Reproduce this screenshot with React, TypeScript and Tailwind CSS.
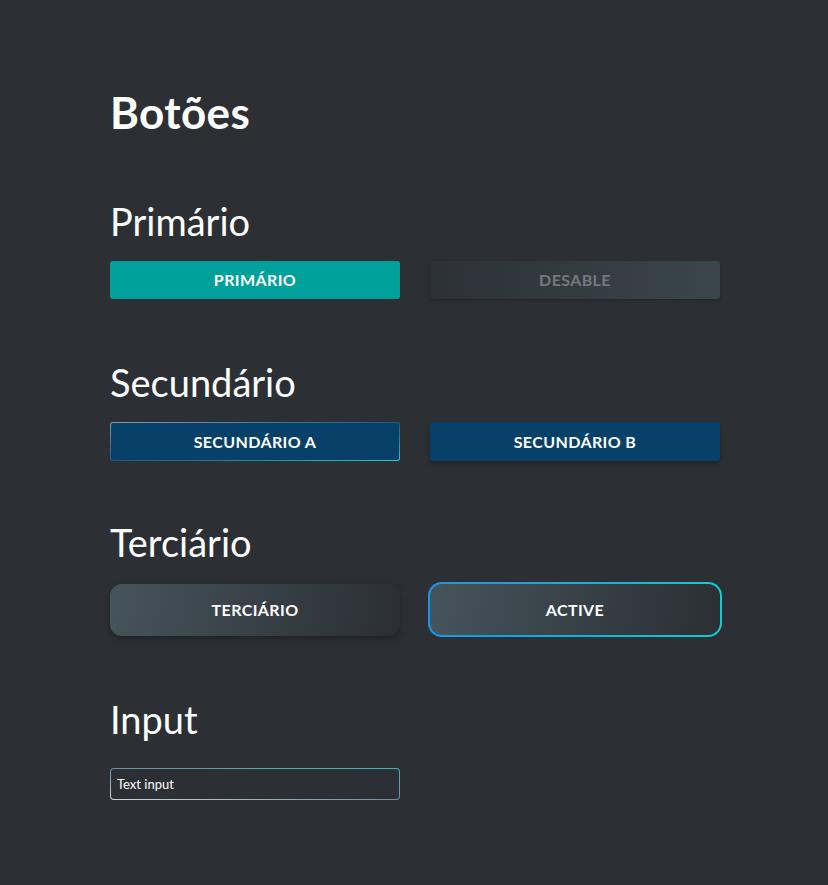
import React from 'react';

const font = { fontFamily: 'Lato, "Open Sans", sans-serif' };

const Heading: React.FC<{ children: React.ReactNode }> = ({ children }) => (
  <h2 className="text-[38px] leading-[40px] text-white font-normal">{children}</h2>
);

const btnText = 'text-[16px] font-bold uppercase tracking-[0.4px]';

const tertiaryBg = 'bg-[linear-gradient(100deg,#46545c_0%,#363f45_55%,#2b2f33_100%)]';

export default function App() {
  return (
    <div style={font} className="min-h-[885px] w-full bg-[#2c3035] pl-[110px] pt-[88px] pb-[80px]">
      <h1 className="text-[44px] leading-[48px] font-bold text-white tracking-[0.4px]">Botões</h1>

      <section className="mt-[65px]">
        <Heading>Primário</Heading>
        <div className="mt-[20px] grid grid-cols-[290px_290px] gap-x-[30px]">
          <button className={`h-[38px] rounded-[3px] bg-[#00a19b] text-white ${btnText}`}>Primário</button>
          <button className={`h-[38px] rounded-[3px] bg-gradient-to-r from-[#2c3136] to-[#3a464c] text-[#75797c] shadow-[0_1px_3px_rgba(0,0,0,0.25)] ${btnText}`}>
            Desable
          </button>
        </div>
      </section>

      <section className="mt-[63px]">
        <Heading>Secundário</Heading>
        <div className="mt-[20px] grid grid-cols-[290px_290px] gap-x-[30px]">
          <div className="h-[39px] rounded-[3px] bg-gradient-to-br from-[#8e9aa3] via-[#1d5a7c] to-[#2ec4c4] p-px">
            <button className={`h-full w-full rounded-[2px] bg-[#07416a] text-white ${btnText}`}>Secundário A</button>
          </div>
          <button className={`h-[39px] rounded-[3px] bg-[#07416a] text-white shadow-[0_2px_4px_rgba(0,0,0,0.35)] ${btnText}`}>
            Secundário B
          </button>
        </div>
      </section>

      <section className="mt-[61px]">
        <Heading>Terciário</Heading>
        <div className="mt-[20px] grid grid-cols-[290px_290px] gap-x-[30px] items-center">
          <button className={`h-[52px] rounded-[12px] ${tertiaryBg} text-white shadow-[0_3px_6px_rgba(0,0,0,0.3)] ${btnText}`}>
            Terciário
          </button>
          <div className="-mx-[2px] h-[55px] rounded-[14px] bg-gradient-to-r from-[#1b95ea] to-[#0fcdd0] p-[2px]">
            <button className={`h-full w-full rounded-[12px] ${tertiaryBg} text-white ${btnText}`}>
              Active
            </button>
          </div>
        </div>
      </section>

      <section className="mt-[62px]">
        <Heading>Input</Heading>
        <div className="mt-[29px] w-[290px] h-[32px] rounded-[4px] bg-gradient-to-tr from-[#d3d7da] via-[#6d8f9e] to-[#3fb3b3] p-px">
          <input
            defaultValue="Text input"
            className="h-full w-full rounded-[3px] bg-[#2c3035] px-[6px] text-[13px] text-white outline-none"
          />
        </div>
      </section>
    </div>
  );
}
